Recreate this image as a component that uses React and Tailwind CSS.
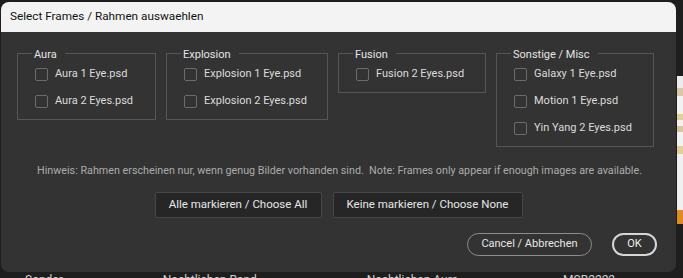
const groups = [
  { title: "Aura", items: ["Aura 1 Eye.psd", "Aura 2 Eyes.psd"], width: "w-[139px]" },
  { title: "Explosion", items: ["Explosion 1 Eye.psd", "Explosion 2 Eyes.psd"], width: "w-[162px]" },
  { title: "Fusion", items: ["Fusion 2 Eyes.psd"], width: "w-[148px]" },
  {
    title: "Sonstige / Misc",
    items: ["Galaxy 1 Eye.psd", "Motion 1 Eye.psd", "Yin Yang 2 Eyes.psd"],
    width: "w-[158px]",
  },
];

// Windows-style group box: the caption sits over the top border
const GroupBox = ({ title, items, width }) => (
  <div className={`${width} relative border border-[#565656]`}>
    <span className="absolute -top-[6px] left-[14px] h-[14px] leading-[14px] pl-[2px] pr-[8px] bg-[#333333] text-[#e4e4e4]">
      {title}
    </span>
    <div className="flex flex-col gap-[13px] pl-[17px] pt-[13px] pb-[11px]">
      {items.map((item) => (
        <label key={item} className="flex items-center gap-[7px] h-[14px] text-[#dcdcdc]">
          <span className="w-[13px] h-[13px] rounded-[2px] border border-[#6c6c6c] bg-[#333333]" />
          <span>{item}</span>
        </label>
      ))}
    </div>
  </div>
);

const App = () => {
  return (
    <div
      className="w-[683px] h-[278px] overflow-hidden bg-[#1e1e1e] text-[11px]"
      style={{ fontFamily: "Roboto, 'Liberation Sans', sans-serif" }}
    >
      <div className="flex">
        {/* Dialog */}
        <div className="pl-[1px] pt-[2px]">
          <div className="w-[675px] rounded-[8px] overflow-hidden bg-[#333333]">
            {/* Title bar */}
            <div className="h-[30px] bg-[#f3f3f3] flex items-center pl-[9px] text-[11.75px] text-[#111]">
              Select Frames / Rahmen auswaehlen
            </div>

            {/* Body */}
            <div className="h-[240px] flex flex-col pt-[21px] pb-[16px]">
              <div className="flex items-start gap-[10px] pl-[16px]">
                {groups.map((g) => (
                  <GroupBox key={g.title} {...g} />
                ))}
              </div>

              <p className="mt-[17px] pl-[2px] text-center text-[10.75px] text-[#ababab] leading-[14px]">
                Hinweis: Rahmen erscheinen nur, wenn genug Bilder vorhanden sind.&nbsp; Note: Frames only appear if enough images are available.
              </p>

              <div className="mt-[14px] flex justify-center gap-[11px] text-[11.5px]">
                <button className="w-[167px] h-[26px] rounded-[2px] border border-[#474747] bg-[#262626] text-[#e6e6e6]">
                  Alle markieren / Choose All
                </button>
                <button className="w-[190px] h-[26px] rounded-[2px] border border-[#474747] bg-[#262626] text-[#e6e6e6]">
                  Keine markieren / Choose None
                </button>
              </div>

              <div className="mt-auto flex justify-end gap-[20px] pr-[19px]">
                <button className="w-[125px] h-[23px] rounded-full border border-[#8c8c8c] text-[#e6e6e6]">
                  Cancel / Abbrechen
                </button>
                <button className="w-[45px] h-[23px] rounded-full border-2 border-[#d6d6d6] text-[#f0f0f0]">
                  OK
                </button>
              </div>
            </div>
          </div>
        </div>

        {/* Background app peeking at the right edge */}
        <div className="ml-[1px] w-[6px] flex flex-col">
          <div className="h-[76px]" />
          <div className="h-[12px] bg-[#ececec]" />
          <div className="h-[8px] bg-[#d9c8a4]" />
          <div className="h-[18px] bg-[#f2f2f2]" />
          <div className="h-[6px] bg-[#e3cf9a]" />
          <div className="h-[6px] bg-[#f2f2f2]" />
          <div className="h-[6px] bg-[#d8c79c]" />
          <div className="h-[14px] bg-[#f2f2f2]" />
          <div className="h-[8px] bg-[#e3cf9a]" />
          <div className="h-[56px] bg-[#f0f0f0]" />
          <div className="h-[14px] bg-[#e08a24]" />
        </div>
      </div>

      {/* Background app text row below the dialog */}
      <div className="flex text-[12px] text-[#cfcfcf] leading-[14px] mt-[1px]">
        <span className="ml-[25px]">Sonder</span>
        <span className="ml-[100px]">Nachtlichen Rand</span>
        <span className="ml-[110px]">Nachtlichen Aura</span>
        <span className="ml-[105px]">MSB2222 ...</span>
      </div>
    </div>
  );
};

export default App;
